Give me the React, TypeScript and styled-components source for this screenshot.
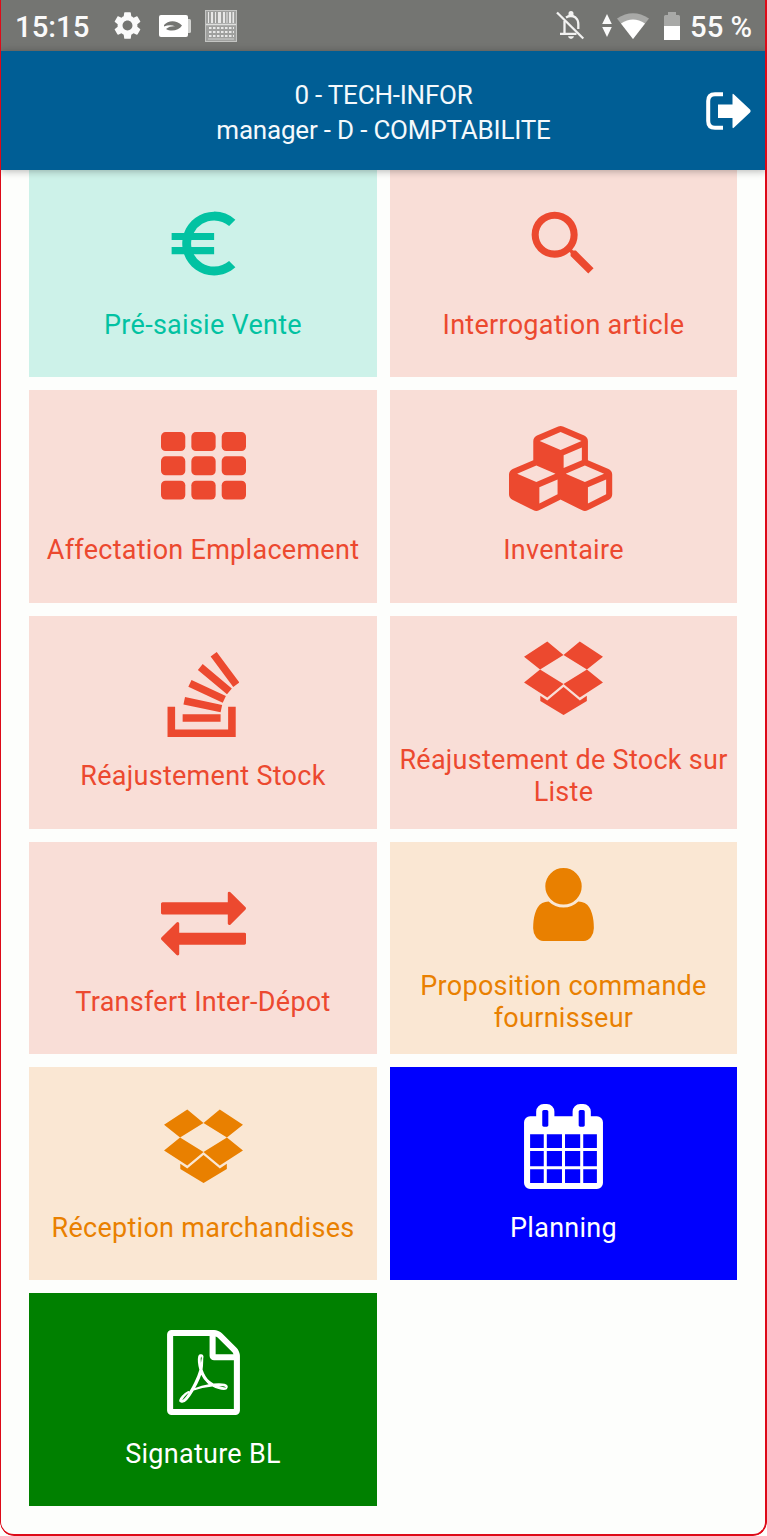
import React from "react";
import styled, { createGlobalStyle } from "styled-components";
import { MdEuroSymbol, MdSearch, MdSettings } from "react-icons/md";

const GlobalStyle = createGlobalStyle`
  * { box-sizing: border-box; }
  html, body { margin: 0; padding: 0; background: #fdfefc; }
  body { font-family: Roboto, "Liberation Sans", sans-serif; }
`;

const Screen = styled.div`
  position: relative;
  display: flex;
  flex-direction: column;
  width: 767px;
  height: 1536px;
  overflow: hidden;
  border-radius: 0 0 14px 14px;
  background: #fdfefc;

  &::after {
    content: "";
    position: absolute;
    inset: 0;
    border: solid #dd0a18;
    border-width: 0 2px 2px 1.5px;
    border-radius: 0 0 14px 14px;
    pointer-events: none;
    z-index: 3;
  }
`;

const StatusBar = styled.div`
  flex: none;
  display: flex;
  align-items: center;
  justify-content: space-between;
  height: 51px;
  padding: 0 15px 0 15px;
  background: #747572;
  color: #fafafa;
`;

const StatusGroup = styled.div`
  display: flex;
  align-items: center;

  svg { flex: none; display: block; }
`;

const StatusText = styled.span<{ $width: number }>`
  width: ${(p) => p.$width}px;
  font-size: 29.3px;
  font-weight: 500;
  line-height: 36px;
  padding-top: 3px;
  white-space: nowrap;
`;

const Slot = styled.span<{ $left: number }>`
  display: flex;
  margin-left: ${(p) => p.$left}px;
`;

const Header = styled.header`
  flex: none;
  display: grid;
  grid-template-columns: 80px 1fr 80px;
  align-items: center;
  height: 119px;
  padding-top: 4px;
  background: #005e95;
  color: #f4f9fc;
  box-shadow: 0 1px 8px rgba(0, 0, 0, 0.3);
  z-index: 2;
`;

const HeaderTitle = styled.div`
  grid-column: 2;
  text-align: center;
  font-size: 26px;
  line-height: 35px;
  letter-spacing: -0.2px;
  white-space: nowrap;
`;

const LogoutButton = styled.button`
  display: flex;
  justify-content: flex-end;
  padding: 0 16px 3px 0;
  border: 0;
  background: none;
  color: #fff;
`;

const Content = styled.main`
  flex: 1;
  min-height: 0;
  padding: 0 30px 0 29px;
  overflow: hidden;
`;

const TileGrid = styled.div`
  display: grid;
  grid-template-columns: 348px 347px;
  grid-auto-rows: 212.8px;
  gap: 13px;
  margin-top: -5.8px;
`;

const Tile = styled.a<{ $bg: string; $fg: string }>`
  display: flex;
  flex-direction: column;
  align-items: center;
  justify-content: center;
  background: ${(p) => p.$bg};
  color: ${(p) => p.$fg};

  svg { display: block; height: 85px; fill: currentColor; }
`;

const TileLabel = styled.span`
  margin-top: 23px;
  padding: 0 4px;
  font-size: 27px;
  line-height: 32px;
  letter-spacing: 0.28px;
  text-align: center;
`;

const Glyph = ({ d, width = 1792 }: { d: string; width?: number }) => (
  <svg viewBox={`0 0 ${width} 1792`} width={(width * 85) / 1792} height={85}>
    <path d={d} />
  </svg>
);

/* Glyphs whose outlines use an upward y axis with a 1536 ascent. */
const FontGlyph = ({ d, width }: { d: string; width: number }) => (
  <svg viewBox={`0 0 ${width} 1792`} width={(width * 85) / 1792} height={85}>
    <path transform="translate(0 1536) scale(1 -1)" d={d} />
  </svg>
);

const GridIcon = () => (
  <svg viewBox="0 0 1792 1792" width={85} height={85}>
    {[0, 1, 2].map((r) =>
      [0, 1, 2].map((c) => (
        <rect key={`${r}${c}`} x={c * 640} y={128 + r * 512} width={512} height={400} rx={96} />
      ))
    )}
  </svg>
);

const CubesIcon = () => (
  <Glyph
    width={2304}
    d="M640 1632l384-192v-314l-384 164v342zm-64-454l404-173-404-173-404 173zm1088 454l384-192v-314l-384 164v342zm-64-454l404-173-404-173-404 173zm-448-293l384-165v-266l-384 164v267zm-64-379l441-189-441-189-441 189zm1088 518v416q0 36-19 67t-52 47l-448 224q-25 14-57 14t-57-14l-448-224q-4-2-7-4-2 2-7 4l-448 224q-25 14-57 14t-57-14l-448-224q-33-16-52-47t-19-67v-416q0-38 21.5-70t56.5-48l434-186v-400q0-38 21.5-70t56.5-48l448-192q23-10 50-10t50 10l448 192q35 16 56.500 48t21.500 70v400l434 186q36 16 57 48t21 70z"
  />
);

const StackIcon = () => (
  <FontGlyph
    width={1536}
    d="M1289 -96h-1118v480h-160v-640h1438v640h-160v-480zM347 428l33 157l783 -165l-33 -156zM450 802l67 146l725 -339l-67 -145zM651 1158l102 123l614 -513l-102 -123zM1048 1536l477 -641l-128 -96l-477 641zM330 65v159h800v-159h-800z"
  />
);

const BoxIcon = () => (
  <FontGlyph
    width={1792}
    d="M402 829l494 -305l-342 -285l-490 319zM1388 274v-108l-490 -293v-1l-1 1l-1 -1v1l-489 293v108l147 -96l342 284v2l1 -1l1 1v-2l343 -284zM554 1418l342 -285l-494 -304l-338 270zM1390 829l338 -271l-489 -319l-343 285zM1239 1418l489 -319l-338 -270l-494 304z"
  />
);

const TransferIcon = () => (
  <Glyph d="M1792 1184v192q0 13-9.5 22.5t-22.5 9.5h-1376v192q0 13-9.5 22.5t-22.5 9.5q-12 0-24-10l-319-320q-9-9-9-22 0-14 9-23l320-320q9-9 23-9 13 0 22.5 9.5t9.5 22.5v192h1376q13 0 22.5 9.5t9.5 22.5zm0-544q0 14-9 23l-320 320q-9 9-23 9-13 0-22.5-9.5t-9.5-22.5v-192h-1376q-13 0-22.5-9.5t-9.5-22.5v-192q0-13 9.5-22.5t22.5-9.5h1376v-192q0-14 9-23t23-9q12 0 24 10l319 319q9 9 9 23z" />
);

const UserIcon = () => (
  <Glyph d="M1536 1399q0 109-62.5 187t-150.5 78h-854q-88 0-150.5-78t-62.5-187q0-85 8.5-160.5t31.5-152 58.5-131 94-89 134.5-34.5q131 128 313 128t313-128q76 0 134.5 34.5t94 89 58.5 131 31.5 152 8.5 160.5zm-256-887q0 159-112.5 271.5t-271.5 112.5-271.5-112.5-112.5-271.5 112.5-271.5 271.5-112.5 271.5 112.5 112.5 271.5z" />
);

const CalendarIcon = () => (
  <Glyph d="M192 1664h288v-288h-288v288zm352 0h320v-288h-320v288zm-352-352h288v-320h-288v320zm352 0h320v-320h-320v320zm-352-384h288v-288h-288v288zm736 736h320v-288h-320v288zm-384-736h320v-288h-320v288zm768 736h288v-288h-288v288zm-384-352h320v-320h-320v320zm-352-864v-288q0-13-9.5-22.5t-22.5-9.5h-64q-13 0-22.5 9.5t-9.5 22.5v288q0 13 9.5 22.5t22.5 9.5h64q13 0 22.5-9.5t9.5-22.5zm736 864h288v-320h-288v320zm-384-384h320v-288h-320v288zm384 0h288v-288h-288v288zm32-480v-288q0-13-9.5-22.5t-22.5-9.5h-64q-13 0-22.5 9.5t-9.5 22.5v288q0 13 9.5 22.5t22.5 9.5h64q13 0 22.5-9.5t9.5-22.5zm384-64v1280q0 52-38 90t-90 38h-1408q-52 0-90-38t-38-90v-1280q0-52 38-90t90-38h128v-96q0-66 47-113t113-47h64q66 0 113 47t47 113v96h384v-96q0-66 47-113t113-47h64q66 0 113 47t47 113v96h128q52 0 90 38t38 90z" />
);

const PdfIcon = () => (
  <Glyph d="M1596 380q28 28 48 76t20 88v1152q0 40-28 68t-68 28h-1344q-40 0-68-28t-28-68v-1600q0-40 28-68t68-28h896q40 0 88 20t76 48zm-444-244v376h376q-10-29-22-41l-313-313q-12-12-41-22zm384 1528v-1024h-416q-40 0-68-28t-28-68v-416h-768v1536h1280zm-514-593q33 26 84 56 59-7 117-7 147 0 177 49 16 22 2 52 0 1-1 2l-2 2v1q-6 38-71 38-48 0-115-20t-130-53q-221 24-392 83-153 262-242 262-15 0-28-7l-24-12q-1-1-6-5-10-10-6-36 9-40 56-91.5t132-96.5q14-9 23 6 2 2 2 4 52-85 107-197 68-136 104-262-24-82-30.5-159.5t6.5-127.5q11-40 42-40h22q23 0 35 15 18 21 9 68-2 6-4 8 1 3 1 8v30q-2 123-14 192 55 164 146 238zm-576 411q52-24 137-158-51 40-87.5 84t-49.5 74zm398-920q-15 42-2 132 1-7 7-44 0-3 7-43 1-4 4-8-1-1-1-2-1-2-1-3-1-22-13-36 0 1-1 2zm-124 661q135-54 284-81-2-1-13-9.5t-16-13.5q-76-67-127-176-27 86-83 197-30 56-45 83zm646-16q-24-24-140-24 76 28 124 28 14 0 18-1 0-1-2-3z" />
);

const EcoBatteryIcon = () => (
  <svg width="32" height="22" viewBox="0 0 32 22">
    <rect width="29" height="22" rx="2" fill="#fff" />
    <path d="M29 4h1.500q1.500 0 1.500 1.500v11q0 1.500-1.500 1.500H29z" fill="#d2d3d1" />
    <path d="M5 10C9 5.500 17 4.500 23 10.500C20 15.500 12 17 7 14C10 11.500 13 11 16 11.300C12.500 9.800 8.500 10.300 5 11.500z" fill="#747572" />
  </svg>
);

const BarcodeAppIcon = () => (
  <svg width="32" height="32" viewBox="0 0 32 32">
    <rect x="0.5" y="0.5" width="31" height="31" fill="#9fa09e" stroke="#c4c5c3" />
    {[
      [3, 1], [6, 2], [10, 1], [13, 3], [18, 2], [21.5, 1], [24, 2], [27.5, 1.5],
    ].map(([x, w]) => (
      <rect key={x} x={x} y="2" width={w} height="11" fill="#e8e8e7" />
    ))}
    <path d="M1 14.5h30" stroke="#dedfdd" strokeWidth="1.5" />
    {[18, 22, 26].map((y) => (
      <path key={y} d={`M4 ${y}h25`} stroke="#e8e8e7" strokeWidth="2" strokeDasharray="2.5 1.5" />
    ))}
    <path d="M3 29h26" stroke="#d0d1cf" />
  </svg>
);

const MutedBellIcon = () => (
  <svg width="29" height="29" viewBox="0 0 29 29" fill="none" stroke="#f2f2f1" strokeWidth="2.3">
    <path d="M10.500 5.500Q11.500 4.500 12.500 4.200V2.500a2.500 2.500 0 0 1 5 0V4.200Q19 4.700 20 6z" fill="#f2f2f1" stroke="none" />
    <path d="M10 6.500Q15 3.500 19.500 6.500Q22.300 9 22.300 13V18" />
    <path d="M8.500 10V22.500M4 22.800H20.500" />
    <path d="M12 25.300h6q-.5 2.700-3 2.700t-3-2.700z" fill="#f2f2f1" stroke="none" />
    <path d="M1 1.500L27.300 27.500" />
  </svg>
);

const DataArrowsIcon = () => (
  <svg width="10" height="23" viewBox="0 0 10 23" fill="#fafafa">
    <path d="M5 0l4.800 10H.2zM5 23l4.800-10H.2z" />
  </svg>
);

const WifiIcon = () => (
  <svg width="32" height="26" viewBox="0 0 32 26">
    <path d="M0 5.500Q16-5 32 5.500L16 26z" fill="#a8a9a7" />
    <path d="M4 10.500Q16 2.500 28 10.500L16 26z" fill="#fff" />
  </svg>
);

const BatteryIcon = () => (
  <svg width="16" height="28" viewBox="0 0 16 28">
    <path d="M4 0h8v3h2.500Q16 3 16 4.500V14H0V4.500Q0 3 1.500 3H4z" fill="#a8a9a7" />
    <path d="M0 14h16v14H0z" fill="#fff" />
  </svg>
);

const LogoutIcon = () => (
  <svg width="45" height="38" viewBox="0 0 45 38">
    <path d="M17 2.200H9Q2.200 2.200 2.200 9v20Q2.200 35.800 9 35.800h8" fill="none" stroke="currentColor" strokeWidth="4" />
    <path d="M12 12.500h14.500V3Q26.500 1 28 2.500L44 17.500q1.200 1.500 0 3L28 35.500q-1.500 1.500-1.500-.5v-9H12z" fill="currentColor" />
  </svg>
);

const red = { $bg: "#f9ded7", $fg: "#ec492f" };
const orange = { $bg: "#fae7d3", $fg: "#e98000" };

const tiles = [
  { label: "Pré-saisie Vente", icon: <MdEuroSymbol size={85} />, $bg: "#cdf2e9", $fg: "#02c2a2" },
  { label: "Interrogation article", icon: <MdSearch size={85} />, ...red },
  { label: "Affectation Emplacement", icon: <GridIcon />, ...red },
  { label: "Inventaire", icon: <CubesIcon />, ...red },
  { label: "Réajustement Stock", icon: <StackIcon />, ...red },
  { label: "Réajustement de Stock sur Liste", icon: <BoxIcon />, ...red },
  { label: "Transfert Inter-Dépot", icon: <TransferIcon />, ...red },
  { label: "Proposition commande fournisseur", icon: <UserIcon />, ...orange },
  { label: "Réception marchandises", icon: <BoxIcon />, ...orange },
  { label: "Planning", icon: <CalendarIcon />, $bg: "#0000fe", $fg: "#ffffff" },
  { label: "Signature BL", icon: <PdfIcon />, $bg: "#008000", $fg: "#ffffff" },
];

export default function App() {
  return (
    <>
      <GlobalStyle />
      <Screen>
        <StatusBar>
          <StatusGroup>
            <StatusText $width={75}>15:15</StatusText>
            <Slot $left={21}><MdSettings size={33} /></Slot>
            <Slot $left={15}><EcoBatteryIcon /></Slot>
            <Slot $left={14}><BarcodeAppIcon /></Slot>
          </StatusGroup>
          <StatusGroup>
            <MutedBellIcon />
            <Slot $left={17}><DataArrowsIcon /></Slot>
            <Slot $left={5}><WifiIcon /></Slot>
            <Slot $left={15}><BatteryIcon /></Slot>
            <Slot $left={10.5}><StatusText $width={62}>55 %</StatusText></Slot>
          </StatusGroup>
        </StatusBar>
        <Header>
          <HeaderTitle>
            0 - TECH-INFOR
            <br />
            manager - D - COMPTABILITE
          </HeaderTitle>
          <LogoutButton aria-label="Déconnexion">
            <LogoutIcon />
          </LogoutButton>
        </Header>
        <Content>
          <TileGrid>
            {tiles.map(({ label, icon, $bg, $fg }) => (
              <Tile key={label} $bg={$bg} $fg={$fg}>
                {icon}
                <TileLabel>{label}</TileLabel>
              </Tile>
            ))}
          </TileGrid>
        </Content>
      </Screen>
    </>
  );
}
